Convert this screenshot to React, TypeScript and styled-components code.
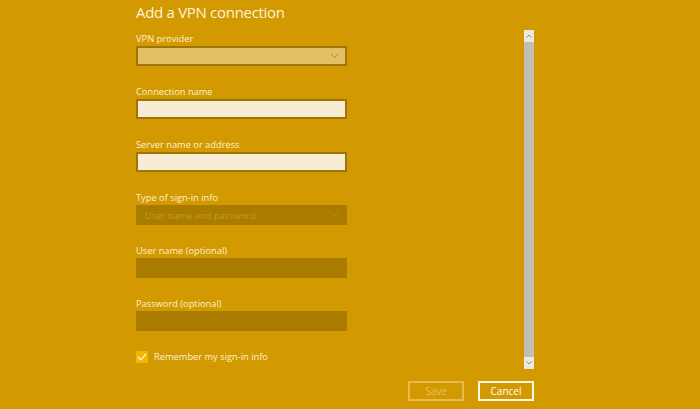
import React from "react";
import styled, { createGlobalStyle } from "styled-components";

const Global = createGlobalStyle`
  html, body { margin: 0; padding: 0; }
  body { background: #d29a00; font-family: "Open Sans", "Noto Sans", sans-serif; }
`;

const Page = styled.div`
  width: 700px;
  height: 409px;
  box-sizing: border-box;
  padding: 0 166px 0 136px;
  background: #d29a00;
  display: flex;
  flex-direction: column;
  overflow: hidden;
`;

const Body = styled.div`
  height: 381px;
  display: flex;
  justify-content: space-between;
  align-items: flex-start;
`;

const Form = styled.div`
  width: 211px;
  display: flex;
  flex-direction: column;
`;

const Title = styled.h1`
  margin: 0 0 7px 0;
  height: 24px;
  line-height: 24px;
  font-size: 15px;
  font-weight: 400;
  letter-spacing: -0.3px;
  color: #fdf3de;
`;

const Field = styled.div`
  display: flex;
  flex-direction: column;
  margin-bottom: 18px;
`;

const Label = styled.label`
  height: 14px;
  line-height: 15px;
  font-size: 9.3px;
  color: #fcf0d6;
  margin-bottom: 1px;
`;

type BoxKind = "select" | "input" | "disabled";

const Box = styled.div<{ $kind: BoxKind }>`
  height: 20px;
  box-sizing: border-box;
  display: flex;
  align-items: center;
  justify-content: space-between;
  padding: 0 6px 0 7px;
  background: ${(p) =>
    p.$kind === "select" ? "#e2c063" : p.$kind === "input" ? "#f8ecd4" : "#a97c00"};
  border: 2px solid ${(p) => (p.$kind === "disabled" ? "#a97c00" : "#9c7606")};
  font-size: 9.3px;
  color: #c39a2e;
`;

const Chevron = ({ color }: { color: string }) => (
  <svg width="9" height="6" viewBox="0 0 9 6">
    <path d="M1 1 L4.5 4.5 L8 1" fill="none" stroke={color} strokeWidth="1" />
  </svg>
);

const CheckRow = styled.div`
  display: flex;
  align-items: center;
  gap: 6px;
  margin-top: 1px;
  font-size: 9.3px;
  color: #fcf0d6;
`;

const CheckBox = styled.span`
  width: 12px;
  height: 12px;
  background: #f3b700;
  display: flex;
  align-items: center;
  justify-content: center;
`;

const Scrollbar = styled.div`
  margin-top: 30px;
  width: 10px;
  height: 339px;
  background: #c2beb5;
  display: flex;
  flex-direction: column;
  justify-content: space-between;
`;

const ScrollBtn = styled.div`
  height: 12px;
  background: #ece9e1;
  display: flex;
  align-items: center;
  justify-content: center;
`;

const Footer = styled.div`
  display: flex;
  justify-content: flex-end;
  gap: 14px;
`;

const Button = styled.button<{ $disabled?: boolean }>`
  width: 56px;
  height: 20px;
  box-sizing: border-box;
  background: transparent;
  border: 2px solid ${(p) => (p.$disabled ? "#e7bb4c" : "#fff6e4")};
  color: ${(p) => (p.$disabled ? "#e7c06a" : "#ffffff")};
  font-family: inherit;
  font-size: 10px;
  padding: 0;
  line-height: 16px;
`;

const Arrow = ({ up }: { up?: boolean }) => (
  <svg width="6" height="4" viewBox="0 0 6 4">
    <path d={up ? "M0.5 3.5 L3 1 L5.5 3.5" : "M0.5 0.5 L3 3 L5.5 0.5"} fill="none" stroke="#8a877f" strokeWidth="1" />
  </svg>
);

export default function App() {
  return (
    <>
      <Global />
      <Page>
        <Body>
          <Form>
            <Title>Add a VPN connection</Title>
            <Field>
              <Label>VPN provider</Label>
              <Box $kind="select">
                <span />
                <Chevron color="#b38c2a" />
              </Box>
            </Field>
            <Field>
              <Label>Connection name</Label>
              <Box $kind="input" />
            </Field>
            <Field>
              <Label>Server name or address</Label>
              <Box $kind="input" />
            </Field>
            <Field>
              <Label>Type of sign-in info</Label>
              <Box $kind="disabled">
                <span>User name and password</span>
                <Chevron color="#bb8f14" />
              </Box>
            </Field>
            <Field>
              <Label>User name (optional)</Label>
              <Box $kind="disabled" />
            </Field>
            <Field>
              <Label>Password (optional)</Label>
              <Box $kind="disabled" />
            </Field>
            <CheckRow>
              <CheckBox>
                <svg width="10" height="8" viewBox="0 0 10 8">
                  <path d="M1 4 L3.8 6.8 L9 1" fill="none" stroke="#fff8e8" strokeWidth="1.2" />
                </svg>
              </CheckBox>
              Remember my sign-in info
            </CheckRow>
          </Form>
          <Scrollbar>
            <ScrollBtn>
              <Arrow up />
            </ScrollBtn>
            <ScrollBtn>
              <Arrow />
            </ScrollBtn>
          </Scrollbar>
        </Body>
        <Footer>
          <Button $disabled>Save</Button>
          <Button>Cancel</Button>
        </Footer>
      </Page>
    </>
  );
}
